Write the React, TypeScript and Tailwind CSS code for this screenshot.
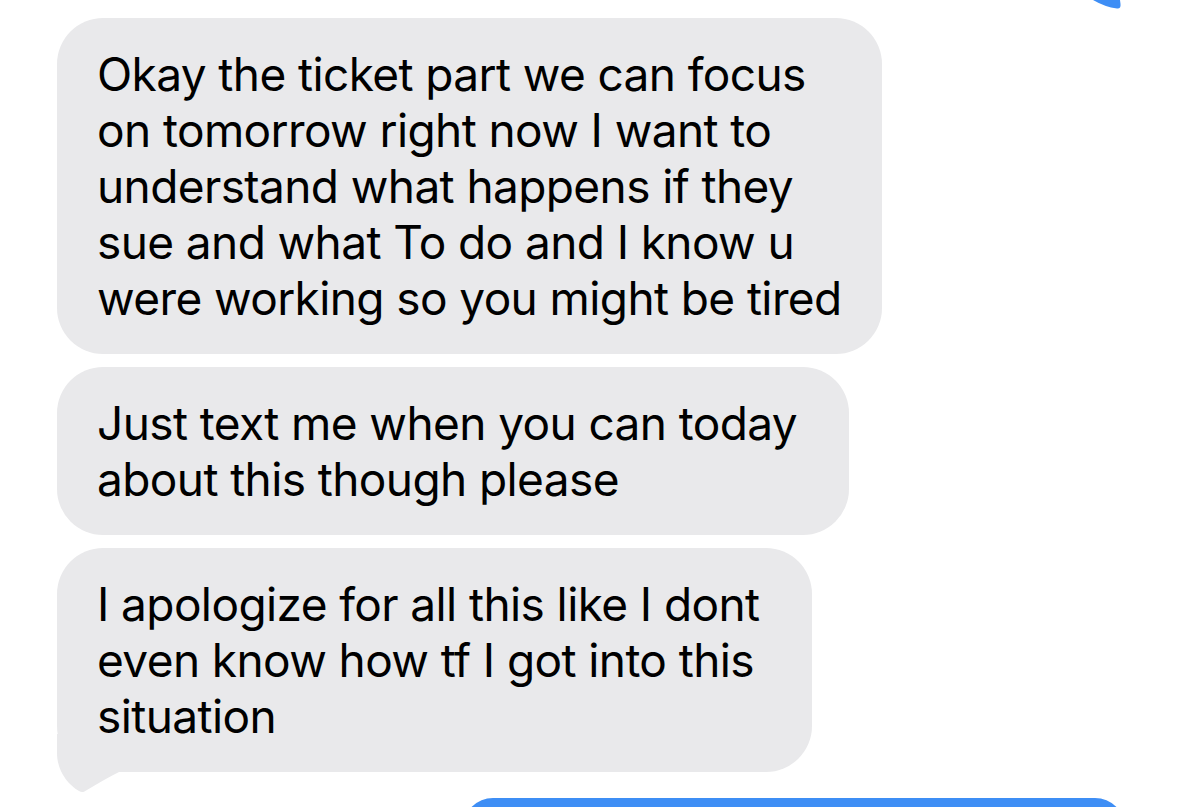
import React from "react";

const Bubble = ({ lines, tail, wide }: { lines: string[]; tail?: boolean; wide?: boolean }) => (
  <div
    className={
      "relative w-fit rounded-[46px] bg-[#e9e9eb] pl-[40px] pt-[28px] pb-[28px] " +
      (wide ? "pr-[52px]" : "pr-[40px]")
    }
  >
    {tail && (
      <svg
        className="absolute left-0 top-full -mt-[38px]"
        width="80"
        height="60"
        viewBox="0 0 80 60"
      >
        <path
          d="M0,0 L0,19 C0,36 10,50 22,57 C25,59 27,58 30,56 C40,50 50,44 62,38 L80,38 L80,0 Z"
          fill="#e9e9eb"
        />
      </svg>
    )}
    <div className="relative text-[46px] leading-[56px] text-black whitespace-nowrap font-['Inter',sans-serif] tracking-[-0.6px]">
      {lines.map((l, i) => (
        <div key={i}>{l}</div>
      ))}
    </div>
  </div>
);

export default function App() {
  return (
    <div className="w-[1200px] h-[807px] overflow-hidden bg-white">
      <div className="relative h-[18px]">
        <svg className="absolute left-[1085px] top-0" width="40" height="12" viewBox="0 0 40 12">
          <path d="M8,0 Q20,7 32,8.5 Q36,9 35.5,4 L35,0 Z" fill="#3e8ef5" />
        </svg>
      </div>
      <div className="flex flex-col gap-[13px] pl-[57px]">
        <Bubble
          lines={[
            "Okay the ticket part we can focus",
            "on tomorrow right now I want to",
            "understand what happens if they",
            "sue and what To do and I know u",
            "were working so you might be tired",
          ]}
        />
        <Bubble lines={["Just text me when you can today", "about this though please"]} wide />
        <Bubble
          lines={[
            "I apologize for all this like I dont",
            "even know how tf I got into this",
            "situation",
          ]}
          tail
          wide
        />
      </div>
      <div className="mt-[26px] ml-[463px] w-[662px] h-[60px] rounded-[46px] bg-[#3e8ef5]" />
    </div>
  );
}
